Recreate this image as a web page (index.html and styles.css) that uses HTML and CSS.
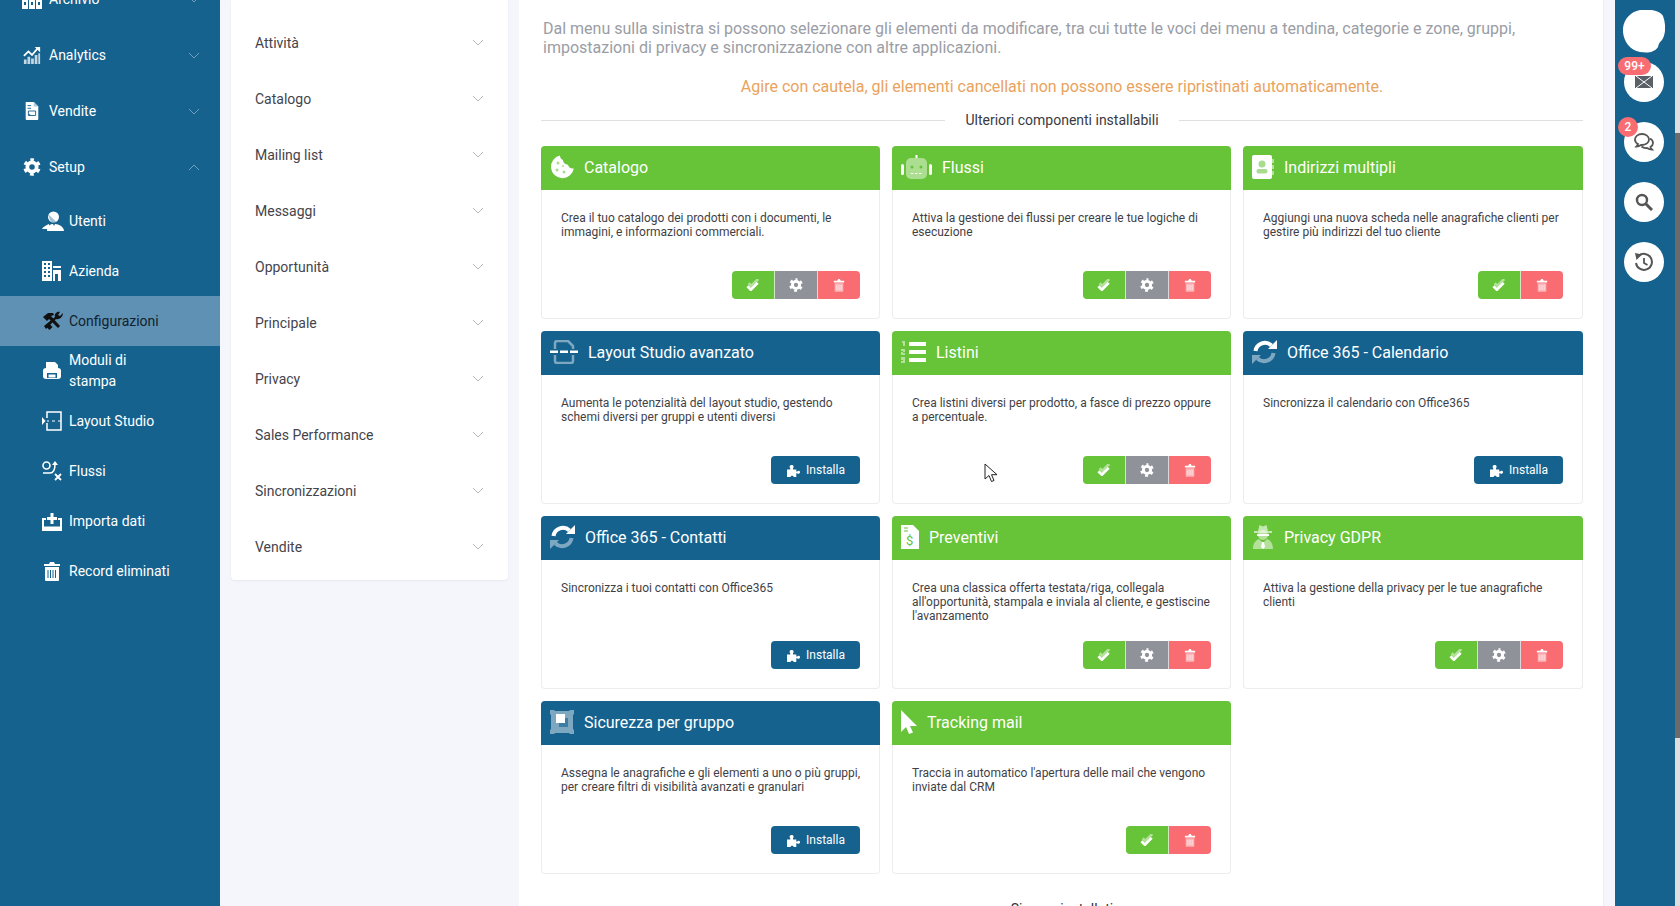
FILE: index.html
```html
<!DOCTYPE html>
<html lang="it">
<head>
<meta charset="utf-8">
<title>Configurazioni</title>
<link rel="stylesheet" href="styles.css">
</head>
<body>
<svg class="defs" width="0" height="0" aria-hidden="true">
  <symbol id="chev" viewBox="0 0 12 7"><path d="M1 1l5 5 5-5" fill="none" stroke="currentColor" stroke-width="1"/></symbol>
  <symbol id="chevup" viewBox="0 0 12 7"><path d="M1 6l5-5 5 5" fill="none" stroke="currentColor" stroke-width="1"/></symbol>
  <symbol id="gear" viewBox="0 0 24 24"><circle cx="12" cy="12" r="6.2" fill="none" stroke="currentColor" stroke-width="5"/><circle cx="12" cy="12" r="9.6" fill="none" stroke="currentColor" stroke-width="4" stroke-dasharray="5 5.05" stroke-dashoffset="2.5" transform="rotate(-90 12 12)"/></symbol>
  <symbol id="check" viewBox="0 0 16 14"><path d="M3 5l3 3 8-8" fill="none" stroke="#fff" stroke-opacity=".5" stroke-width="3.200"/><path d="M1.500 8.500l4 4 8-8" fill="none" stroke="#fff" stroke-width="3.200"/></symbol>
  <symbol id="trash" viewBox="0 0 14 16"><path d="M1 3h4l1-2h2l1 2h4v2H1z" fill="#fff"/><path d="M2 6h10v9a1 1 0 0 1-1 1H3a1 1 0 0 1-1-1z" fill="#fff" fill-opacity=".5"/><path d="M4.500 8v6M7 8v6M9.500 8v6" stroke="#fff" stroke-opacity=".7"/></symbol>
  <symbol id="puzzle" viewBox="0 0 16 14"><path d="M1 6h3.500V4.500C3.500 3.500 3.500 1 6 1s2.500 2.500 1.500 3.500V6H11v2h1c.8-1 3-.8 3 1s-2.200 2-3 1h-1v4H8c.5-1.800-3.500-1.800-3 0H1z" fill="#fff"/></symbol>
  <symbol id="sync" viewBox="0 0 25 24"><path d="M3.500 11A9.500 9.500 0 0 1 19.500 5.500" fill="none" stroke="#fff" stroke-width="4"/><path d="M16 9h9V0z" fill="#fff"/><path d="M21.500 13A9.500 9.500 0 0 1 5.500 18.500" fill="none" stroke="#fff" stroke-opacity=".45" stroke-width="4"/><path d="M9 15H0v9z" fill="#fff" fill-opacity=".45"/></symbol>
</svg>

<aside class="sidebar">
  <a class="nav-top nav-clipped"><svg class="ico ico-bleed" width="20" height="20" viewBox="0 0 20 20"><path d="M0 0h6v20H0zM7 0h6v20H7zM14 0h6v20h-6z" fill="#fff"/><path d="M2 13h2v3H2zM9 13h2v3H9zM16 13h2v3h-2z" fill="#15628f"/></svg><span>Archivio</span><svg class="chev" width="12" height="7"><use href="#chev"/></svg></a>
  <a class="nav-top"><svg class="ico" width="18" height="20" viewBox="0 0 20 20"><path d="M1 11l5-5 4 4 6-7" fill="none" stroke="#fff" stroke-width="2"/><path d="M13 1h6v6z" fill="#fff"/><path d="M1 15h3v5H1zM5 12h3v8H5zM9 14h3v6H9zM13 10h3v10h-3zM17 8h2v12h-2z" fill="#fff" fill-opacity=".75"/></svg><span>Analytics</span><svg class="chev" width="12" height="7"><use href="#chev"/></svg></a>
  <a class="nav-top"><svg class="ico" width="18" height="20" viewBox="0 0 20 20"><path d="M3 0h9l5 5v14a1 1 0 0 1-1 1H4a1 1 0 0 1-1-1z" fill="#fff"/><path d="M12 0v5h5" fill="#a9cadf"/><path d="M5 4h4M5 7h4M6 14h2" stroke="#15628f"/><path d="M6 10h8v5H6z" fill="none" stroke="#15628f"/></svg><span>Vendite</span><svg class="chev" width="12" height="7"><use href="#chev"/></svg></a>
  <a class="nav-top"><svg class="ico icon-white" width="18" height="18"><use href="#gear"/></svg><span>Setup</span><svg class="chev" width="12" height="7"><use href="#chevup"/></svg></a>

  <a class="nav-sub"><svg class="ico ico-wide" width="22" height="20" viewBox="0 0 22 20"><circle cx="11.500" cy="6" r="5.500" fill="#fff"/><path d="M0 18c1-2 4-4 7-5l1 5z" fill="#fff"/><path d="M5 20c0-5 3-7 6-7l1 2 1-2c4 0 9 3 9 7z" fill="#fff"/><path d="M6 3l9 8.500H9z" fill="#15628f" fill-opacity=".4"/></svg><span>Utenti</span></a>
  <a class="nav-sub"><svg class="ico" width="20" height="20" viewBox="0 0 20 20"><path d="M0 0h10v20H0z" fill="#fff"/><path d="M2 2h2v2H2zM6 2h2v2H6zM2 6h2v2H2zM6 6h2v2H6zM2 10h2v2H2zM6 10h2v2H6zM2 14h2v2H2zM6 14h2v2H6z" fill="#15628f"/><path d="M11 5h8v2h-8zM11 9h8v11h-3v-7h-3v7h-2z" fill="#fff"/></svg><span>Azienda</span></a>
  <a class="nav-sub nav-active"><svg class="ico ico-wide" width="22" height="20" viewBox="0 0 22 20"><path d="M1 6l5-4h5l1 2-3 1 9 10-2 2L7 8 5 10z" fill="#111"/><path d="M21 2l-3 3-2-1 2-3c-3-1-6 2-5 5L2 15l2 3 10-10c3 1 7-2 7-6z" fill="#111"/><path d="M7.500 13l3 3-3 3-3-3z" fill="#111"/></svg><span>Configurazioni</span></a>
  <a class="nav-sub"><svg class="ico" width="20" height="20" viewBox="0 0 20 20"><path d="M4 1h9l3 3v4H4z" fill="#fff"/><rect x="1" y="7" width="18" height="11" rx="3" fill="#fff"/><path d="M5 12h10v5H5z" fill="#15628f"/><path d="M6.500 13.500h7v3h-7z" fill="#fff"/></svg><span>Moduli di<br>stampa</span></a>
  <a class="nav-sub"><svg class="ico" width="20" height="20" viewBox="0 0 20 20"><path d="M5 7V1h14v18H5v-7" fill="none" stroke="#fff" stroke-width="1.500"/><path d="M5 10h2M10 10h3M16 10h3" stroke="#fff" stroke-width="1.200"/><path d="M0 6l3.500 4L0 14z" fill="#fff"/></svg><span>Layout Studio</span></a>
  <a class="nav-sub"><svg class="ico" width="20" height="20" viewBox="0 0 20 20"><circle cx="4.500" cy="4.500" r="3.500" fill="none" stroke="#fff" stroke-width="1.600"/><path d="M1 12h7c4 0 5-3 5-9" fill="none" stroke="#fff" stroke-width="1.600"/><path d="M10 4l3-4 3 4z" fill="#fff"/><path d="M13 13l6 6M19 13l-6 6" stroke="#fff" stroke-width="1.800"/></svg><span>Flussi</span></a>
  <a class="nav-sub"><svg class="ico" width="20" height="20" viewBox="0 0 20 20"><path d="M4 8H1v11h18V8h-3" fill="none" stroke="#fff" stroke-width="2"/><path d="M2 15.500h16V19H2z" fill="#fff"/><path d="M10 2v11M5 7.500h10" stroke="#fff" stroke-width="3"/></svg><span>Importa dati</span></a>
  <a class="nav-sub"><svg class="ico" width="20" height="20" viewBox="0 0 20 20"><path d="M2 3h5l1-2h4l1 2h5v2H2z" fill="#fff"/><path d="M3 6h14v13a1 1 0 0 1-1 1H4a1 1 0 0 1-1-1z" fill="#fff"/><path d="M6 9v8M8.500 9v8M11 9v8M13.500 9v8" stroke="#15628f"/></svg><span>Record eliminati</span></a>
</aside>

<nav class="panel">
  <a class="panel-row"><span>Attività</span><svg class="chev" width="12" height="7"><use href="#chev"/></svg></a>
  <a class="panel-row"><span>Catalogo</span><svg class="chev" width="12" height="7"><use href="#chev"/></svg></a>
  <a class="panel-row"><span>Mailing list</span><svg class="chev" width="12" height="7"><use href="#chev"/></svg></a>
  <a class="panel-row"><span>Messaggi</span><svg class="chev" width="12" height="7"><use href="#chev"/></svg></a>
  <a class="panel-row"><span>Opportunità</span><svg class="chev" width="12" height="7"><use href="#chev"/></svg></a>
  <a class="panel-row"><span>Principale</span><svg class="chev" width="12" height="7"><use href="#chev"/></svg></a>
  <a class="panel-row"><span>Privacy</span><svg class="chev" width="12" height="7"><use href="#chev"/></svg></a>
  <a class="panel-row"><span>Sales Performance</span><svg class="chev" width="12" height="7"><use href="#chev"/></svg></a>
  <a class="panel-row"><span>Sincronizzazioni</span><svg class="chev" width="12" height="7"><use href="#chev"/></svg></a>
  <a class="panel-row"><span>Vendite</span><svg class="chev" width="12" height="7"><use href="#chev"/></svg></a>
</nav>

<main class="main">
  <p class="intro">Dal menu sulla sinistra si possono selezionare gli elementi da modificare, tra cui tutte le voci dei menu a tendina, categorie e zone, gruppi, impostazioni di privacy e sincronizzazione con altre applicazioni.</p>
  <p class="warning">Agire con cautela, gli elementi cancellati non possono essere ripristinati automaticamente.</p>
  <div class="divider"><span>Ulteriori componenti installabili</span></div>

  <section class="grid">
    <article class="card">
      <header class="head head-green"><svg width="24" height="24" viewBox="0 0 24 24"><path d="M10 0.500a11.500 11.500 0 1 0 13.800 13c-3 .5-5.300-1.200-5.800-3.800-2.800 0-5-2.200-5-4.700C11 4.500 10 2.500 10 .5z" fill="#fff"/><g fill="#a9dc8f"><circle cx="8" cy="8" r="1.500"/><circle cx="7" cy="15" r="1.500"/><circle cx="14" cy="17" r="1.500"/><circle cx="13" cy="11" r="1"/></g></svg><h3>Catalogo</h3></header>
      <div class="body"><p>Crea il tuo catalogo dei prodotti con i documenti, le immagini, e informazioni commerciali.</p>
      <div class="actions"><button class="btn btn-ok"><svg width="14" height="12"><use href="#check"/></svg></button><button class="btn btn-cfg"><svg class="icon-white" width="14" height="14"><use href="#gear"/></svg></button><button class="btn btn-del"><svg width="12" height="14"><use href="#trash"/></svg></button></div></div>
    </article>
    <article class="card">
      <header class="head head-green"><svg width="31" height="24" viewBox="0 0 31 24"><rect x="5" y="3" width="21" height="21" rx="5" fill="#fff" fill-opacity=".45"/><rect x="14.500" y="0" width="2" height="3" fill="#fff"/><rect x="0" y="9" width="3" height="11" rx="1.500" fill="#fff"/><rect x="28" y="9" width="3" height="11" rx="1.500" fill="#fff"/><circle cx="11" cy="12" r="1.500" fill="#67c337"/><circle cx="20" cy="12" r="1.500" fill="#67c337"/><path d="M10 18.500h11" stroke="#fff" stroke-dasharray="2.500 1.500"/></svg><h3>Flussi</h3></header>
      <div class="body"><p>Attiva la gestione dei flussi per creare le tue logiche di esecuzione</p>
      <div class="actions"><button class="btn btn-ok"><svg width="14" height="12"><use href="#check"/></svg></button><button class="btn btn-cfg"><svg class="icon-white" width="14" height="14"><use href="#gear"/></svg></button><button class="btn btn-del"><svg width="12" height="14"><use href="#trash"/></svg></button></div></div>
    </article>
    <article class="card">
      <header class="head head-green"><svg width="22" height="24" viewBox="0 0 22 24"><rect x="0" y="0" width="20" height="24" rx="2" fill="#fff"/><path d="M20 4h2v4h-2zM20 10h2v4h-2zM20 16h2v4h-2z" fill="#fff" fill-opacity=".5"/><circle cx="10" cy="9" r="3.500" fill="#a9dc8f"/><rect x="4.500" y="14" width="11" height="4.500" rx="2" fill="#a9dc8f"/></svg><h3>Indirizzi multipli</h3></header>
      <div class="body"><p>Aggiungi una nuova scheda nelle anagrafiche clienti per gestire più indirizzi del tuo cliente</p>
      <div class="actions"><button class="btn btn-ok"><svg width="14" height="12"><use href="#check"/></svg></button><button class="btn btn-del"><svg width="12" height="14"><use href="#trash"/></svg></button></div></div>
    </article>

    <article class="card">
      <header class="head head-blue"><svg width="28" height="24" viewBox="0 0 28 24"><path d="M5 9V3a2 2 0 0 1 2-2h11l5 5v3M5 15v6a2 2 0 0 0 2 2h14a2 2 0 0 0 2-2v-6" fill="none" stroke="#fff" stroke-opacity=".45" stroke-width="2.500"/><path d="M0 10.500h8v2.500H0zM10 10.500h8v2.500h-8zM20 10.500h8v2.500h-8z" fill="#fff"/></svg><h3>Layout Studio avanzato</h3></header>
      <div class="body"><p>Aumenta le potenzialità del layout studio, gestendo schemi diversi per gruppi e utenti diversi</p>
      <div class="actions"><button class="btn btn-install"><svg width="15" height="13"><use href="#puzzle"/></svg>Installa</button></div></div>
    </article>
    <article class="card">
      <header class="head head-green"><svg width="25" height="24" viewBox="0 0 25 24"><path d="M8 2h17v4H8zM8 10h17v4H8zM8 18h17v4H8z" fill="#fff"/><path d="M1 1h3v5H2V3H1zM0 9h4v3H2v1h2v2H0v-3h2v-1H0zM0 17h4v6H0v-2h2v-1H0v-1h2v-0H0z" fill="#fff" fill-opacity=".5"/></svg><h3>Listini</h3></header>
      <div class="body"><p>Crea listini diversi per prodotto, a fasce di prezzo oppure a percentuale.</p>
      <div class="actions"><button class="btn btn-ok"><svg width="14" height="12"><use href="#check"/></svg></button><button class="btn btn-cfg"><svg class="icon-white" width="14" height="14"><use href="#gear"/></svg></button><button class="btn btn-del"><svg width="12" height="14"><use href="#trash"/></svg></button></div></div>
    </article>
    <article class="card">
      <header class="head head-blue"><svg width="25" height="24"><use href="#sync"/></svg><h3>Office 365 - Calendario</h3></header>
      <div class="body"><p>Sincronizza il calendario con Office365</p>
      <div class="actions"><button class="btn btn-install"><svg width="15" height="13"><use href="#puzzle"/></svg>Installa</button></div></div>
    </article>

    <article class="card">
      <header class="head head-blue"><svg width="25" height="24"><use href="#sync"/></svg><h3>Office 365 - Contatti</h3></header>
      <div class="body"><p>Sincronizza i tuoi contatti con Office365</p>
      <div class="actions"><button class="btn btn-install"><svg width="15" height="13"><use href="#puzzle"/></svg>Installa</button></div></div>
    </article>
    <article class="card">
      <header class="head head-green"><svg width="18" height="24" viewBox="0 0 18 24"><path d="M0 0h12l6 6v18H0z" fill="#fff"/><path d="M3 3h4M3 6h4" stroke="#67c337"/><text x="5" y="20" class="dollar">$</text></svg><h3>Preventivi</h3></header>
      <div class="body"><p>Crea una classica offerta testata/riga, collegala all'opportunità, stampala e inviala al cliente, e gestiscine l'avanzamento</p>
      <div class="actions"><button class="btn btn-ok"><svg width="14" height="12"><use href="#check"/></svg></button><button class="btn btn-cfg"><svg class="icon-white" width="14" height="14"><use href="#gear"/></svg></button><button class="btn btn-del"><svg width="12" height="14"><use href="#trash"/></svg></button></div></div>
    </article>
    <article class="card">
      <header class="head head-green"><svg width="22" height="24" viewBox="0 0 22 24"><path d="M1 24c0-6 3-9 6-10l4 4 4-4c3 1 6 4 6 10z" fill="#fff" fill-opacity=".5"/><circle cx="11" cy="10" r="5" fill="#fff" fill-opacity=".5"/><path d="M6 6l1.500-6L11 1.500 14.500 0 16 6h4v2H2V6z" fill="#fff" fill-opacity=".6"/><path d="M5 10h12" stroke="#fff" stroke-width="2"/><path d="M10 17h2l1 5-2 2-2-2z" fill="#fff"/></svg><h3>Privacy GDPR</h3></header>
      <div class="body"><p>Attiva la gestione della privacy per le tue anagrafiche clienti</p>
      <div class="actions"><button class="btn btn-ok"><svg width="14" height="12"><use href="#check"/></svg></button><button class="btn btn-cfg"><svg class="icon-white" width="14" height="14"><use href="#gear"/></svg></button><button class="btn btn-del"><svg width="12" height="14"><use href="#trash"/></svg></button></div></div>
    </article>

    <article class="card">
      <header class="head head-blue"><svg width="24" height="24" viewBox="0 0 24 24"><path d="M0 0h4l1 1h14l1-1h4v4l-1 1v14l1 1v4h-4l-1-1H5l-1 1H0v-4l1-1V5L0 4z" fill="#fff" fill-opacity=".45"/><path d="M6 4h9v9H6z" fill="#fff"/><path d="M15 8h3v9H9v-4h6z" fill="#15628f" fill-opacity=".6"/></svg><h3>Sicurezza per gruppo</h3></header>
      <div class="body"><p>Assegna le anagrafiche e gli elementi a uno o più gruppi, per creare filtri di visibilità avanzati e granulari</p>
      <div class="actions"><button class="btn btn-install"><svg width="15" height="13"><use href="#puzzle"/></svg>Installa</button></div></div>
    </article>
    <article class="card">
      <header class="head head-green"><svg width="16" height="24" viewBox="0 0 16 24"><path d="M0 0v22l5-5 3 7 4-1.500-3-6.500h7z" fill="#fff"/></svg><h3>Tracking mail</h3></header>
      <div class="body"><p>Traccia in automatico l'apertura delle mail che vengono inviate dal CRM</p>
      <div class="actions"><button class="btn btn-ok"><svg width="14" height="12"><use href="#check"/></svg></button><button class="btn btn-del"><svg width="12" height="14"><use href="#trash"/></svg></button></div></div>
    </article>
  </section>
  <p class="more">Si sono installati</p>
</main>

<aside class="rail">
  <svg class="avatar" width="42" height="43" viewBox="0 0 42 43"><path d="M17 0c8-1 20 0 23 6 3 8 3 18-1 24-2 2-3 3-4 7-4 6-11 6-18 5C7 40 1 32 0 22-1 12 6 2 17 0z" fill="#fff"/></svg>
  <a class="round"><svg width="18" height="12" viewBox="0 0 18 12"><rect width="18" height="12" fill="#5b5f66"/><path d="M1 0l8 6 8-6M1 12l8-6 8 6" fill="none" stroke="#fff"/></svg><span class="badge badge-wide">99+</span></a>
  <a class="round"><svg width="20" height="18" viewBox="0 0 20 18"><path d="M8 1C4 1 1 3.500 1 6.500c0 2 1 3.500 3 4.500-.5 1-1 2-1.500 2.500 2 0 3.500-.8 4.500-1.500h1c4 0 7-2.500 7-5.500S12 1 8 1z" fill="none" stroke="#555" stroke-width="1.800"/><path d="M16 5.500c2 1 3 2.500 3 4.500 0 1.500-1 3-2.500 4 .3 1 1 2 1.500 2.500-2 0-3.500-.5-5-1.500-2 .3-4-.3-5.500-1.500" fill="none" stroke="#555" stroke-width="1.800"/></svg><span class="badge">2</span></a>
  <a class="round"><svg width="18" height="18" viewBox="0 0 18 18"><circle cx="7" cy="7" r="5" fill="none" stroke="#555" stroke-width="2.400"/><path d="M11 11l6 6" stroke="#555" stroke-width="3"/></svg></a>
  <a class="round"><svg width="20" height="20" viewBox="0 0 20 20"><path d="M4.500 4A8 8 0 1 1 2 11" fill="none" stroke="#555" stroke-width="2"/><path d="M1 1l7 1.500L2.500 8z" fill="#555"/><path d="M10 6v5l3.500 2" fill="none" stroke="#555" stroke-width="1.800"/></svg></a>
</aside>
<div class="scrollbar"><div class="thumb"></div></div>

<svg class="pointer" width="14" height="20" viewBox="0 0 14 20"><path d="M1 1v15l4-3.500 2.500 6 2.500-1-2.500-5.800H13z" fill="#fff" stroke="#222"/></svg>
</body>
</html>
```
FILE: styles.css
```css
* { box-sizing: border-box; }
html, body { margin: 0; height: 906px; overflow: hidden; }
body {
  display: flex;
  align-items: flex-start;
  background: #f4f6fb;
  font-family: Roboto, "Liberation Sans", sans-serif;
  font-size: 14px;
  color: #3f3f47;
  position: relative;
}
.defs { position: absolute; }
svg { flex: none; display: block; }
.icon-white { color: #fff; }

.sidebar {
  width: 220px;
  height: 906px;
  flex: none;
  background: #15628f;
  color: #fff;
  overflow: hidden;
}
.nav-top {
  height: 56px;
  display: flex;
  align-items: center;
  gap: 8px;
  padding: 0 20px 0 23px;
}
.nav-clipped { margin-top: -29px; }
.nav-top .chev { margin-left: auto; color: #6fa0bf; }
.ico-bleed { margin: 0 -1px; }
.ico-wide { margin-right: -2px; }
.nav-sub {
  height: 50px;
  display: flex;
  align-items: center;
  gap: 7px;
  padding-left: 42px;
  line-height: 21px;
}
.nav-active { background: #5e91b3; color: #14202b; }
.nav-top + .nav-sub { margin-top: 1px; }

.panel {
  width: 277px;
  flex: none;
  margin-left: 11px;
  padding: 15px 0 5px;
  background: #fff;
  border-radius: 0 0 4px 4px;
  box-shadow: 0 1px 2px rgba(60, 70, 90, .08);
}
.panel-row {
  height: 56px;
  display: flex;
  align-items: center;
  justify-content: space-between;
  padding: 0 24px;
  color: #44444c;
}
.panel-row .chev { color: #b5b7bc; margin-bottom: 2px; }

.main {
  width: 1085px;
  height: 906px;
  flex: none;
  margin-left: 11px;
  padding: 19px 20px 0 22px;
  background: #fff;
  border-right: 1px solid #eceff7;
  overflow: hidden;
}
.intro {
  margin: 0 0 20px;
  padding-left: 2px;
  font-size: 16px;
  line-height: 19px;
  color: #9a9da5;
}
.warning {
  margin: 0 0 15px;
  font-size: 16px;
  line-height: 19px;
  text-align: center;
  color: #e9a35e;
}
.divider {
  display: flex;
  align-items: center;
  gap: 20px;
  height: 18px;
  margin-bottom: 17px;
  color: #3a3a42;
}
.divider::before, .divider::after {
  content: "";
  flex: 1;
  height: 1px;
  background: #dfdfe2;
}

.grid {
  display: grid;
  grid-template-columns: 339px 339px 340px;
  grid-auto-rows: 173px;
  gap: 12px;
}
.card {
  display: flex;
  flex-direction: column;
  background: #fff;
  border: 1px solid #ededf0;
  border-top: 0;
  border-radius: 4px;
}
.head {
  height: 44px;
  flex: none;
  display: flex;
  align-items: center;
  gap: 10px;
  margin: 0 -1px;
  padding: 0 0 2px 9px;
  border-radius: 4px 4px 0 0;
  color: #fff;
}
.head h3 { margin: 0; font-size: 16px; font-weight: 400; }
.head-green { background: #67c337; }
.head-blue { background: #15628f; }
.dollar { font-family: Roboto, sans-serif; font-size: 13px; fill: #67c337; }

.body {
  flex: 1;
  display: flex;
  flex-direction: column;
  padding: 21px 19px 19px;
}
.body p { margin: 0 -2px 0 0; font-size: 12px; line-height: 14px; color: #3f3f47; }
.actions { margin-top: auto; display: flex; justify-content: flex-end; }
.btn {
  height: 28px;
  width: 43px;
  border: 0;
  padding: 0;
  display: flex;
  align-items: center;
  justify-content: center;
  font-family: inherit;
  font-size: 12px;
  color: #fff;
}
.btn-ok { background: #67c337; border-radius: 4px 0 0 4px; border-right: 1px solid #cfe9c0; }
.btn-cfg { background: #8f9299; border-right: 1px solid #d9d9dc; }
.btn-del { background: #f96d72; border-radius: 0 4px 4px 0; width: 42px; }
.btn-install { background: #15628f; border-radius: 4px; width: 89px; gap: 5px; }

.more {
  margin: 26px 0 0;
  text-align: center;
  line-height: 18px;
  color: #333;
}

.rail {
  width: 60px;
  height: 906px;
  flex: none;
  margin-left: 11px;
  padding: 10px 2px 0 0;
  display: flex;
  flex-direction: column;
  align-items: center;
  gap: 20px;
  background: #15628f;
}
.avatar { margin-bottom: -11px; }
.round {
  width: 40px;
  height: 40px;
  border-radius: 50%;
  background: #fff;
  display: flex;
  align-items: center;
  justify-content: center;
  position: relative;
}
.badge {
  position: absolute;
  left: -6px;
  top: -5px;
  width: 20px;
  height: 20px;
  border-radius: 10px;
  background: #f96d72;
  color: #fff;
  font-size: 12px;
  font-weight: 500;
  line-height: 20px;
  text-align: center;
}
.badge-wide { width: 33px; height: 18px; line-height: 18px; }
.scrollbar { width: 5px; height: 906px; flex: none; background: #dedee0; padding-top: 133px; }
.thumb { height: 605px; background: #6b6b6b; }
.pointer { position: absolute; left: 984px; top: 463px; }
```
